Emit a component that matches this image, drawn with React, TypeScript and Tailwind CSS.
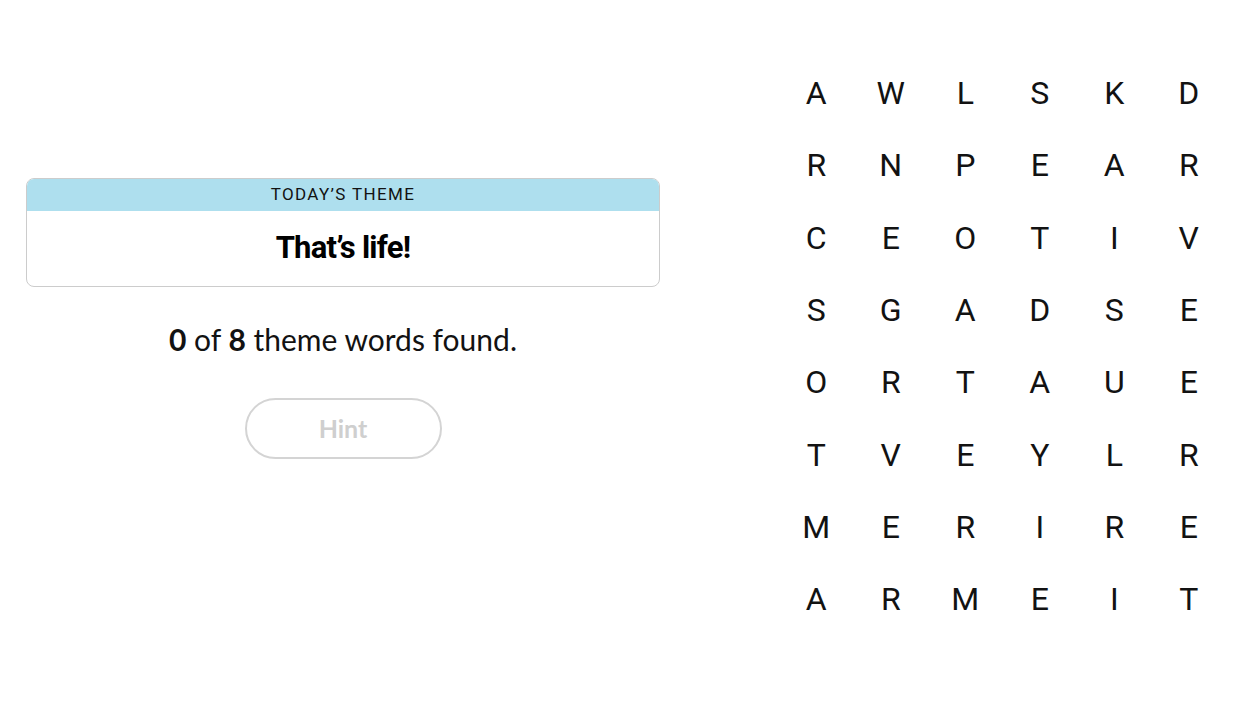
const GRID = [
  "AWLSKD",
  "RNPEAR",
  "CEOTIV",
  "SGADSE",
  "ORTAUE",
  "TVEYLR",
  "MERIRE",
  "ARMEIT",
];

export default function App() {
  return (
    <div className="w-[1250px] h-[711px] bg-white flex overflow-hidden">
      {/* Left: theme + hint */}
      <div className="ml-[26px] mt-[178px] w-[634px] flex flex-col items-center">
        <div className="w-full rounded-lg border border-[#cccccc] overflow-hidden font-['Roboto',sans-serif]">
          <div className="h-[32px] bg-[#aedfee] flex items-center justify-center text-[17px] tracking-[0.08em] text-[#121212]">
            TODAY’S THEME
          </div>
          <div className="h-[75px] flex items-center justify-center text-[31px] font-bold text-black tracking-tight">
            That’s life!
          </div>
        </div>

        <p className="mt-[37px] text-[30px] text-[#121212] leading-none font-['Lato','Liberation_Sans',sans-serif]">
          <b>0</b> of <b>8</b> theme words found.
        </p>

        <button className="mt-[44px] w-[197px] h-[61px] rounded-full border-2 border-[#d4d4d4] text-[25px] font-bold text-[#cfcfcf] font-['Lato','Liberation_Sans',sans-serif]">
          Hint
        </button>
      </div>

      {/* Right: letter grid */}
      <div className="ml-[119px] mt-[57px] grid grid-cols-6 grid-rows-[repeat(8,72.3px)] w-[447px] h-fit font-['Roboto',sans-serif]">
        {GRID.join("").split("").map((ch, i) => (
          <div key={i} className="flex items-center justify-center text-[32px] text-[#121212]">
            {ch}
          </div>
        ))}
      </div>
    </div>
  );
}
